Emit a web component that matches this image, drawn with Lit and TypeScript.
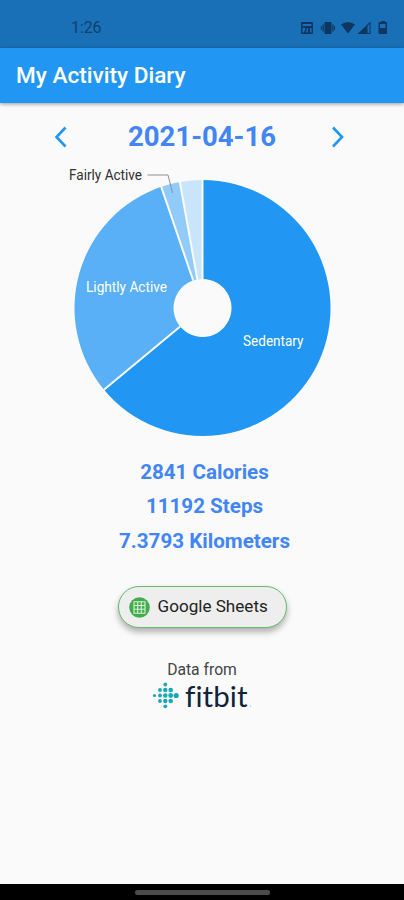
import { LitElement, html, css, svg } from "lit";
import { customElement } from "lit/decorators.js";

interface Slice {
  from: number;
  to: number;
  color: string;
}

const CX = 202.5;
const CY = 140;
const OUTER = 128;
const INNER = 29;

const SLICES: Slice[] = [
  { from: 0, to: 230.3, color: "#2196f3" },
  { from: 230.3, to: 341.2, color: "#59b0f7" },
  { from: 341.2, to: 349.8, color: "#90cbf9" },
  { from: 349.8, to: 360, color: "#c8e5fc" },
];

const point = (deg: number, r: number) => {
  const a = (deg * Math.PI) / 180;
  return `${(CX + r * Math.sin(a)).toFixed(2)} ${(CY - r * Math.cos(a)).toFixed(2)}`;
};

const slicePath = ({ from, to }: Slice) => {
  const large = to - from > 180 ? 1 : 0;
  return `M${point(from, INNER)}L${point(from, OUTER)}A${OUTER} ${OUTER} 0 ${large} 1 ${point(to, OUTER)}L${point(to, INNER)}A${INNER} ${INNER} 0 ${large} 0 ${point(from, INNER)}Z`;
};

@customElement("activity-chart")
class ActivityChart extends LitElement {
  static styles = css`
    :host { display: block; height: 272px; }
    svg { display: block; }
    text { font: 14px Roboto, sans-serif; }
    .inside { fill: #fff; }
    .outside { fill: #303030; }
    .leader { fill: none; stroke: #8a9096; stroke-width: 1; }
  `;
  render() {
    return html`<svg width="404" height="272" viewBox="0 0 404 272">
      ${SLICES.map((s) => svg`<path d=${slicePath(s)} fill=${s.color}></path>`)}
      ${SLICES.map((s) => svg`<path d=${`M${point(s.from, INNER)}L${point(s.from, OUTER + 0.5)}`} stroke="#fafafa" stroke-width="2"></path>`)}
      <path class="leader" d="M147.5 7H168L172.5 25"></path>
      <text class="outside" x="69" y="12" textLength="73" lengthAdjust="spacingAndGlyphs">Fairly Active</text>
      <text class="inside" x="86" y="124" textLength="81" lengthAdjust="spacingAndGlyphs">Lightly Active</text>
      <text class="inside" x="243" y="178" textLength="60.5" lengthAdjust="spacingAndGlyphs">Sedentary</text>
    </svg>`;
  }
}

@customElement("fitbit-logo")
class FitbitLogo extends LitElement {
  static styles = css`
    :host { display: block; height: 50px; margin-top: -10px; }
    svg { display: block; }
    text {
      font: 29.5px Lato, sans-serif;
      font-variant-ligatures: none;
      fill: #10233a;
    }
    .dot { fill: #17a8b4; }
  `;
  render() {
    const dots = [
      [2.5, 14.5, 1.6],
      [8, 9, 1.9], [8, 14.5, 1.9], [8, 20, 1.9],
      [13.3, 3.5, 1.9], [13.3, 9, 2.2], [13.3, 14.5, 2.2], [13.3, 20, 2.2], [13.3, 25.3, 1.9],
      [18.7, 9, 2.3], [18.7, 14.5, 2.4], [18.7, 20, 2.3],
      [24.2, 14.5, 2.6],
    ];
    return html`<svg width="110" height="50" viewBox="-5 -10 110 50">
      ${dots.map(([x, y, r]) => svg`<circle class="dot" cx=${x} cy=${y} r=${r}></circle>`)}
      <text x="33" y="26" textLength="62.5" lengthAdjust="spacing">fitbit</text>
      <circle cx="98.5" cy="25" r="0.5" fill="#8b949c"></circle>
    </svg>`;
  }
}

@customElement("app-root")
class AppRoot extends LitElement {
  static styles = css`
    :host {
      display: flex;
      flex-direction: column;
      height: 900px;
      overflow: hidden;
      background: #fafafa;
      font-family: Roboto, sans-serif;
    }
    * { box-sizing: border-box; }
    .status {
      flex: none;
      height: 48px;
      padding: 7px 15px 0 71px;
      display: flex;
      align-items: center;
      justify-content: space-between;
      background: #1a70b7;
      color: #10406d;
      font-size: 16px;
      letter-spacing: -0.1px;
    }
    .status svg { display: block; }
    .bar {
      flex: none;
      height: 55px;
      padding-left: 16px;
      display: flex;
      align-items: center;
      background: #2196f3;
      box-shadow: 0 1px 4px rgba(0, 0, 0, 0.4);
      color: #fff;
      font-size: 22.6px;
      font-weight: 500;
    }
    main {
      flex: 1;
      display: flex;
      flex-direction: column;
      align-items: center;
    }
    .date {
      align-self: stretch;
      height: 65px;
      padding: 2px 56px 0 48px;
      display: flex;
      align-items: center;
      justify-content: space-between;
      color: #4285f4;
      font-size: 27.5px;
      font-weight: 700;
    }
    .date span { margin-left: 8px; }
    .stats {
      margin: 15px 0 0 5px;
      color: #4285f4;
      font-size: 20.6px;
      font-weight: 700;
      line-height: 34.4px;
      text-align: center;
    }
    .sheets {
      flex: none;
      margin-top: 28px;
      width: 169px;
      height: 42px;
      padding: 0 0 0 10px;
      display: flex;
      align-items: center;
      gap: 8px;
      border: 1px solid #66bb6a;
      border-radius: 21px;
      background: #eee;
      box-shadow: 0 4px 6px rgba(0, 0, 0, 0.3);
      color: #222;
      font: 17.1px Roboto, sans-serif;
    }
    .sheets span { padding-bottom: 2px; }
    .from {
      margin-top: 31px;
      height: 22px;
      line-height: 22px;
      font-size: 15.7px;
      color: #444;
    }
    .nav {
      flex: none;
      height: 16px;
      display: flex;
      justify-content: center;
      padding-top: 6px;
      background: #000;
    }
    .pill { width: 135px; height: 5px; border-radius: 3px; background: #4b4b4b; }
  `;

  render() {
    return html`
      <div class="status">
        <span>1:26</span>
        <svg width="88" height="16" viewBox="0 0 88 16" fill="#0d3760">
          <path fill-rule="evenodd" d="M0 3q0-1 1-1h10q1 0 1 1v10q0 1-1 1H1q-1 0-1-1ZM1.5 4v2H10.5V4ZM1.5 7.5V12.5H3L4.5 8ZM6 8.5 5 12.5H6.5L7.5 8.5ZM9 8V12.5H10.5V8Z"></path>
          <path d="M23.500 2h7v12h-7ZM21.500 4.500h1.300v7h-1.300ZM19.800 6h1v4h-1ZM31.200 4.500h1.300v7h-1.300ZM33 6h1v4h-1Z"></path>
          <path d="M40 4.500Q47 -.5 54 4.500L47 13.500Z"></path>
          <path fill-rule="evenodd" d="M56.500 14 69.500 1.500V14ZM66.500 6V13H68.500V4Z"></path>
          <path fill-rule="evenodd" d="M78.500 2H80V1h4v1h1q1 0 1 1v10q0 1-1 1h-6.500q-1 0-1-1V3q0-1 1-1ZM79 4v4h5.500V4Z"></path>
        </svg>
      </div>
      <div class="bar">My Activity Diary</div>
      <main>
        <div class="date">
          <svg width="24" height="24" viewBox="0 0 24 24" fill="none" stroke="#2196f3" stroke-width="2.600"><path d="M17.500 2.500 8.500 12l9 9.500"></path></svg>
          <span>2021-04-16</span>
          <svg width="24" height="24" viewBox="0 0 24 24" fill="none" stroke="#2196f3" stroke-width="2.600"><path d="M9 2.500 18 12l-9 9.500"></path></svg>
        </div>
        <activity-chart></activity-chart>
        <div class="stats">
          <div>2841 Calories</div>
          <div>11192 Steps</div>
          <div>7.3793 Kilometers</div>
        </div>
        <button class="sheets">
          <svg width="21" height="21" viewBox="0 0 21 21">
            <circle cx="10.500" cy="10.500" r="10.300" fill="#43ad4c"></circle>
            <path d="M5 4.700h11v11.600H5ZM5 8.500h11M5 12.300h11M8.700 4.700v11.600M12.300 4.700v11.600" fill="none" stroke="#d9f0da" stroke-width="1.100"></path>
          </svg>
          <span>Google Sheets</span>
        </button>
        <div class="from">Data from</div>
        <fitbit-logo></fitbit-logo>
      </main>
      <div class="nav"><div class="pill"></div></div>
    `;
  }
}
